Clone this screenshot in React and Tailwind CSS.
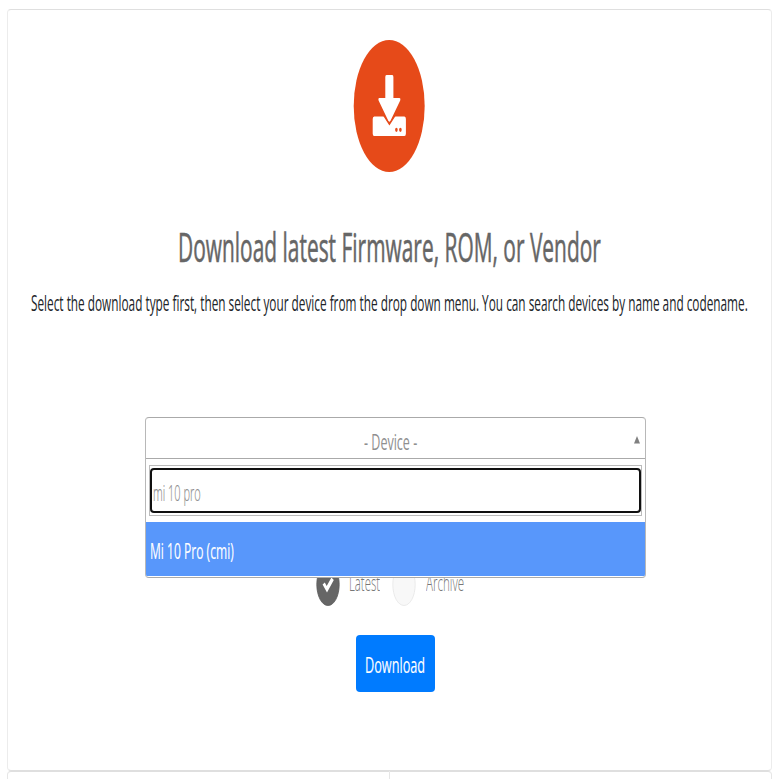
import React, { useLayoutEffect, useRef, useState } from 'react';

// Text condensed horizontally to a given width
const NarrowText = ({ width, className = '', children }) => {
  const ref = useRef(null);
  const [scale, setScale] = useState(0.55);

  useLayoutEffect(() => {
    setScale(width / ref.current.offsetWidth);
  }, [width, children]);

  return (
    <span className={`block ${className}`} style={{ width }}>
      <span
        ref={ref}
        className="inline-block origin-left whitespace-nowrap"
        style={{ transform: `scaleX(${scale})` }}
      >
        {children}
      </span>
    </span>
  );
};

const DownloadLogo = () => (
  <svg width="72" height="132" viewBox="0 0 72 132" className="block">
    <ellipse cx="36.2" cy="66" rx="35.5" ry="66" fill="#e64a19" />
    <path
      d="M21 76.5 H31.2 L36.2 84.5 L41.2 76.5 H51.2 Q52.7 76.5 52.7 79 V93.5 Q52.7 96 51.2 96 H21 Q19.5 96 19.5 93.5 V79 Q19.5 76.5 21 76.5 Z"
      transform="translate(0.2 0)"
      fill="#fff"
    />
    <path
      d="M33.3 35 H39 Q40.2 35 40.2 37 V58 H46.3 Q47.8 58 47 60.5 L37.2 81 Q36.2 82.5 35.2 81 L25.4 60.5 Q24.6 58 26 58 H32.1 V37 Q32.1 35 33.3 35 Z"
      transform="translate(0.2 0)"
      fill="#fff"
    />
    <path d="M30.8 75.6 L36.4 84.3 L42 75.6" fill="none" stroke="#e64a19" strokeWidth="1.2" />
    <ellipse cx="43.4" cy="89.8" rx="1.3" ry="2.1" fill="#e64a19" />
    <ellipse cx="47.4" cy="89.8" rx="1.3" ry="2.1" fill="#e64a19" />
  </svg>
);

const Radio = ({ checked }) => (
  <svg width="24" height="43" viewBox="0 0 24 43" className="block">
    <ellipse
      cx="12"
      cy="21.5"
      rx="11.2"
      ry="21"
      fill={checked ? '#666' : '#f8f8f8'}
      stroke={checked ? '#5c5c5c' : '#e6e6e6'}
      strokeWidth="0.8"
    />
    {checked && (
      <path d="M6.6 21.5 L8.8 19.5 L10.7 23 L15.4 14.5 L17.8 17 L11 29.5 Z" fill="#fff" />
    )}
  </svg>
);

const DeviceSelect = () => (
  <div className="relative ml-[137px] w-[501px] h-[42px]">
    <div className="absolute inset-x-0 top-0 z-10 h-[161px] flex flex-col bg-white border border-[#aaa] border-x-[#b8b8b8] rounded-[4px] overflow-hidden text-[22px]">
      <div className="h-[41px] shrink-0 flex items-center border-b border-[#aaa] text-[#8f8f8f]">
        <NarrowText width={53} className="ml-[218px] mt-[6px] leading-[34px]">- Device -</NarrowText>
        <svg width="6" height="8" viewBox="0 0 6 8" className="ml-auto mr-[5px] mt-[3px]">
          <path d="M3 0 L6 7.5 H0 Z" fill="#808080" />
        </svg>
      </div>

      <div className="mt-[6px] mx-[3px] h-[51px] shrink-0 border border-[#bbb] py-[2px]">
        <div className="h-[45px] rounded-[4px] border-2 border-[#101010] text-[#8f8f8f] font-light [-webkit-text-stroke:0.2px]">
          <NarrowText width={48} className="ml-px leading-[45px]">mi 10 pro</NarrowText>
        </div>
      </div>

      <div className="mt-[6px] h-[54px] shrink-0 bg-[#5897fb] text-white pl-[4px] [-webkit-text-stroke:0.15px]">
        <NarrowText width={84} className="leading-[57px]">Mi 10 Pro (cmi)</NarrowText>
      </div>
    </div>
  </div>
);

const App = () => {
  return (
    <div className="h-[779px] overflow-hidden bg-white pt-[9px] pl-[7px] font-['Open_Sans','Noto_Sans',sans-serif] text-[#212529]">
      <div className="w-[765px] h-[762px] border border-x-[#ececec] border-t-[#dfdfdf] border-b-[#dfdfdf] rounded-[4px]">
        <div className="mt-[30px] ml-[345px]">
          <DownloadLogo />
        </div>

        <h1 className="mt-[49px] ml-[170px] text-[41px] leading-[50px] text-[#666] [-webkit-text-stroke:0.6px]">
          <NarrowText width={423}>Download latest Firmware, ROM, or Vendor</NarrowText>
        </h1>
        <p className="mt-[14px] ml-[23px] text-[22px] leading-[34px]">
          <NarrowText width={717}>
            Select the download type first, then select your device from the drop down menu. You can search devices by name and codename.
          </NarrowText>
        </p>

        <div className="mt-[98px]">
          <DeviceSelect />
        </div>

        <div className="mt-[104px] ml-[308px] h-[43px] flex items-center text-[22px] leading-[39px] font-light text-[#777]">
          <Radio checked />
          <NarrowText width={31} className="ml-[9px] -mt-[4px]">Latest</NarrowText>
          <div className="ml-[12px]">
            <Radio />
          </div>
          <NarrowText width={38} className="ml-[10px] -mt-[4px]">Archive</NarrowText>
        </div>

        <button className="mt-[29px] ml-[348px] block w-[79px] h-[57px] rounded-[4px] bg-[#007bff] text-white text-[22px] text-left leading-[58px] pl-[9px] [-webkit-text-stroke:0.15px]">
          <NarrowText width={60}>Download</NarrowText>
        </button>
      </div>

      <div className="flex">
        <div className="w-[383px] h-[20px] border border-[#e6e6e6] border-t-[#dfdfdf] rounded-tl-[4px]"></div>
        <div className="w-[382px] h-[20px] border border-l-0 border-[#e6e6e6] border-t-[#dfdfdf] rounded-tr-[4px]"></div>
      </div>
    </div>
  );
};

export default App;
